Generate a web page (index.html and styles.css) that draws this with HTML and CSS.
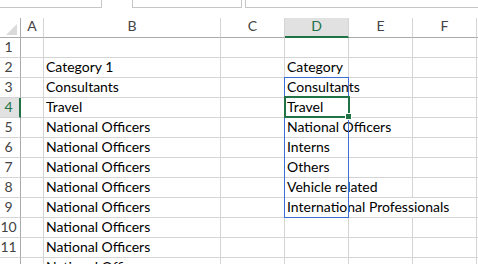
FILE: index.html
```html
<!DOCTYPE html>
<html lang="en">
<head>
  <meta charset="UTF-8" />
  <meta name="viewport" content="width=device-width, initial-scale=1.0"/>
  <title>Sheet1</title>
  <link rel="stylesheet" href="styles.css">
</head>
<body>

  <div class="toolbar">
    <div class="box namebox"></div>
    <div class="box fxbox"></div>
    <div class="box formula"></div>
  </div>

  <div class="sheet">
    <div class="row colhead">
      <div class="cell corner"><span class="tri"></span></div>
      <div class="cell">A</div>
      <div class="cell">B</div>
      <div class="cell">C</div>
      <div class="cell active">D</div>
      <div class="cell">E</div>
      <div class="cell">F</div>
      <div class="cell"></div>
    </div>

    <div class="row">
      <div class="cell num">1</div>
      <div class="cell"></div><div class="cell"></div><div class="cell"></div>
      <div class="cell"></div><div class="cell"></div><div class="cell"></div><div class="cell"></div>
    </div>
    <div class="row">
      <div class="cell num">2</div>
      <div class="cell"></div><div class="cell">Category 1</div><div class="cell"></div>
      <div class="cell">Category</div><div class="cell"></div><div class="cell"></div><div class="cell"></div>
    </div>
    <div class="row">
      <div class="cell num">3</div>
      <div class="cell"></div><div class="cell">Consultants</div><div class="cell"></div>
      <div class="cell spill">Consultants</div><div class="cell"></div><div class="cell"></div><div class="cell"></div>
    </div>
    <div class="row">
      <div class="cell num active">4</div>
      <div class="cell"></div><div class="cell">Travel</div><div class="cell"></div>
      <div class="cell">Travel</div><div class="cell"></div><div class="cell"></div><div class="cell"></div>
    </div>
    <div class="row">
      <div class="cell num">5</div>
      <div class="cell"></div><div class="cell">National Officers</div><div class="cell"></div>
      <div class="cell spill">National Officers</div><div class="cell"></div><div class="cell"></div><div class="cell"></div>
    </div>
    <div class="row">
      <div class="cell num">6</div>
      <div class="cell"></div><div class="cell">National Officers</div><div class="cell"></div>
      <div class="cell">Interns</div><div class="cell"></div><div class="cell"></div><div class="cell"></div>
    </div>
    <div class="row">
      <div class="cell num">7</div>
      <div class="cell"></div><div class="cell">National Officers</div><div class="cell"></div>
      <div class="cell">Others</div><div class="cell"></div><div class="cell"></div><div class="cell"></div>
    </div>
    <div class="row">
      <div class="cell num">8</div>
      <div class="cell"></div><div class="cell">National Officers</div><div class="cell"></div>
      <div class="cell spill">Vehicle related</div><div class="cell"></div><div class="cell"></div><div class="cell"></div>
    </div>
    <div class="row">
      <div class="cell num">9</div>
      <div class="cell"></div><div class="cell">National Officers</div><div class="cell"></div>
      <div class="cell spill">International Professionals</div><div class="cell spill"></div><div class="cell"></div><div class="cell"></div>
    </div>
    <div class="row">
      <div class="cell num">10</div>
      <div class="cell"></div><div class="cell">National Officers</div><div class="cell"></div>
      <div class="cell"></div><div class="cell"></div><div class="cell"></div><div class="cell"></div>
    </div>
    <div class="row">
      <div class="cell num">11</div>
      <div class="cell"></div><div class="cell">National Officers</div><div class="cell"></div>
      <div class="cell"></div><div class="cell"></div><div class="cell"></div><div class="cell"></div>
    </div>
    <div class="row">
      <div class="cell num"></div>
      <div class="cell"></div><div class="cell">National Officers</div><div class="cell"></div>
      <div class="cell"></div><div class="cell"></div><div class="cell"></div><div class="cell"></div>
    </div>

    <!-- list range D3:D9 and the active cell D4 -->
    <div class="range"></div>
    <div class="selection"><span class="handle"></span></div>
  </div>

</body>
</html>
```

FILE: styles.css
```css
body {
  margin: 0;
  background: #fff;
  font-family: Lato, "Liberation Sans", sans-serif;
  font-size: 14px;
  color: #000;
  overflow: hidden;
}
.toolbar {
  display: flex;
  height: 18px;
}
.box {
  height: 8px;
  box-sizing: border-box;
  border: 1px solid #c6c6c6;
  border-top: none;
}
.namebox {
  width: 102px;
  border-left: none;
}
.fxbox {
  width: 110px;
  margin-left: 30px;
}
.formula {
  flex: 1;
  margin-left: 3px;
  border-right: none;
}
.sheet {
  position: relative;
  height: 246px;
  overflow: hidden;
}
.row {
  display: grid;
  grid-template-columns: 21px 23px 177px 64px 64px 64px 64px 64px;
  height: 20px;
}
.cell {
  box-sizing: border-box;
  border-right: 1px solid #d4d4d4;
  border-bottom: 1px solid #d4d4d4;
  display: flex;
  align-items: flex-end;
  padding: 0 0 3px 2px;
  line-height: 15px;
  white-space: nowrap;
  overflow: visible;
}
.cell.spill {
  border-right-color: transparent;
}
.colhead .cell {
  justify-content: center;
  padding: 0 0 4px 0;
  color: #444;
  border-bottom-color: #ababab;
}
.colhead .cell.active {
  background: #e1e1e1;
  color: #217346;
  border-bottom: 2px solid #217346;
  padding-bottom: 3px;
}
.corner {
  justify-content: flex-end !important;
  border-right-color: #ababab !important;
  padding: 0 3px 2px 0 !important;
}
.tri {
  width: 0;
  height: 0;
  border-left: 11px solid transparent;
  border-bottom: 11px solid #dadada;
}
.num {
  justify-content: center;
  padding: 0 3px 3px 0;
  color: #444;
  border-right-color: #ababab;
}
.num.active {
  background: #e1e1e1;
  color: #217346;
  border-right: 2px solid #217346;
  padding-right: 2px;
}
.range {
  position: absolute;
  left: 284px;
  top: 59px;
  width: 65px;
  height: 141px;
  box-sizing: border-box;
  border: 1px solid #3c6fd1;
}
.selection {
  position: absolute;
  left: 284px;
  top: 78px;
  width: 66px;
  height: 22px;
  box-sizing: border-box;
  border: 2px solid #217346;
}
.handle {
  position: absolute;
  right: -4px;
  bottom: -4px;
  width: 5px;
  height: 5px;
  background: #217346;
  border: 1px solid #fff;
}
```
